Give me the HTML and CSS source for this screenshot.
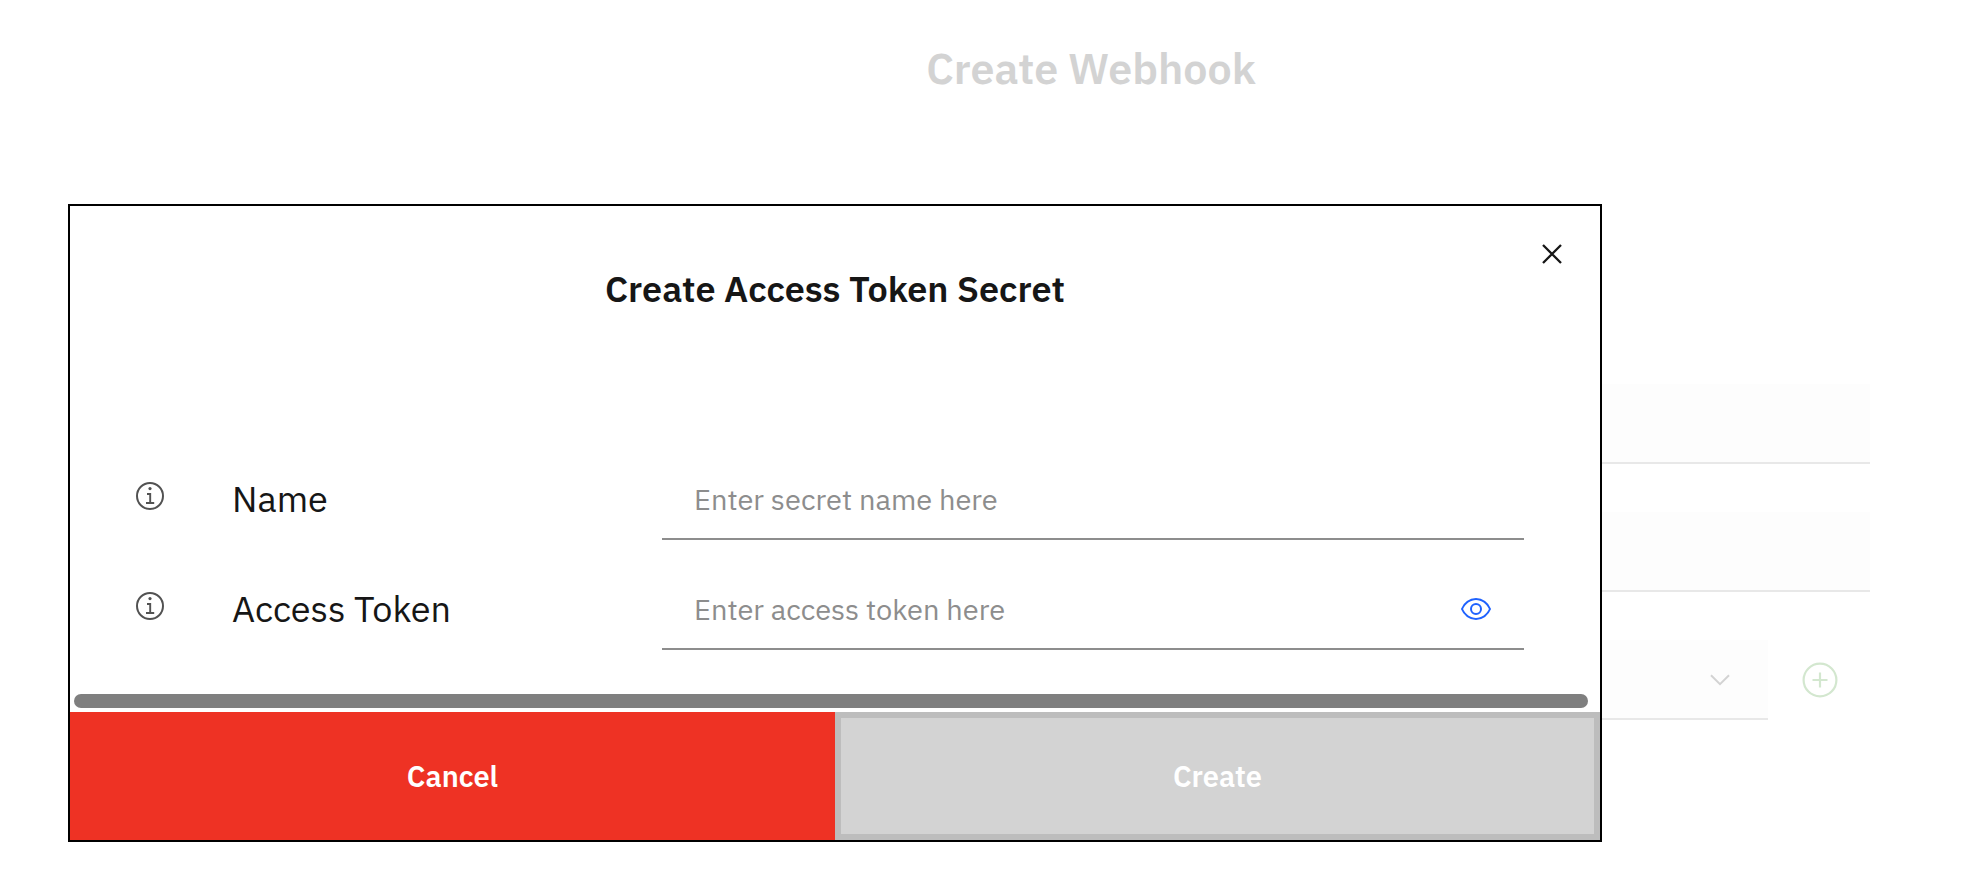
FILE: index.html
```html
<!DOCTYPE html>
<html lang="en">
<head>
<meta charset="utf-8">
<title>Create Webhook</title>
<link rel="stylesheet" href="styles.css">
</head>
<body>
<main class="page">
  <h1 class="page-title">Create Webhook</h1>
  <form class="page-form">
    <input class="page-field" type="text" aria-label="Webhook name">
    <input class="page-field" type="text" aria-label="Repository URL">
    <div class="page-row">
      <div class="select-wrap">
        <select class="page-field" aria-label="Access token"><option></option></select>
        <svg class="chevron" viewBox="0 0 20 12" aria-hidden="true"><path d="M1 1.2 10 10.2 19 1.2" fill="none" stroke="currentColor" stroke-width="2"/></svg>
      </div>
      <button class="add-button" type="button" aria-label="Add access token">
        <svg viewBox="0 0 36 36" aria-hidden="true"><g fill="none" stroke="currentColor" stroke-width="2.2"><circle cx="18" cy="18" r="16.4"/><path d="M18 10.5v15M10.5 18h15"/></g></svg>
      </button>
    </div>
  </form>
</main>

<section class="modal" role="dialog" aria-labelledby="modal-title">
  <header class="modal-header">
    <button class="close-button" type="button" aria-label="Close">
      <svg viewBox="0 0 20 20" aria-hidden="true"><path d="M1 1 19 19M19 1 1 19" stroke="currentColor" stroke-width="2.3"/></svg>
    </button>
    <h2 class="modal-title" id="modal-title">Create Access Token Secret</h2>
  </header>
  <div class="modal-body">
    <div class="form-row">
      <svg class="info" viewBox="0 0 28 28" aria-hidden="true"><circle cx="14" cy="14" r="13" fill="none" stroke="currentColor" stroke-width="2"/><circle cx="14" cy="6.6" r="1.6" fill="currentColor"/><path d="M11 12h3.2v9M10 21h8.2" fill="none" stroke="currentColor" stroke-width="1.9"/></svg>
      <label class="form-label" for="secret-name">Name</label>
      <div class="input-wrap"><input class="form-input" id="secret-name" type="text" placeholder="Enter secret name here"></div>
    </div>
    <div class="form-row">
      <svg class="info" viewBox="0 0 28 28" aria-hidden="true"><circle cx="14" cy="14" r="13" fill="none" stroke="currentColor" stroke-width="2"/><circle cx="14" cy="6.6" r="1.6" fill="currentColor"/><path d="M11 12h3.2v9M10 21h8.2" fill="none" stroke="currentColor" stroke-width="1.9"/></svg>
      <label class="form-label" for="access-token">Access Token</label>
      <div class="input-wrap">
        <input class="form-input" id="access-token" type="password" placeholder="Enter access token here">
        <button class="eye-button" type="button" aria-label="Show access token">
          <svg viewBox="0 0 32 32" fill="currentColor" aria-hidden="true"><path d="M30.94 15.66A16.69 16.69 0 0 0 16 5 16.69 16.69 0 0 0 1.06 15.66a1 1 0 0 0 0 .68A16.69 16.69 0 0 0 16 27a16.69 16.69 0 0 0 14.94-10.66 1 1 0 0 0 0-.68zM16 25c-5.3 0-10.9-3.93-12.93-9C5.1 10.93 10.7 7 16 7s10.9 3.93 12.93 9C26.9 21.07 21.3 25 16 25z"/><path d="M16 10a6 6 0 1 0 6 6 6 6 0 0 0-6-6zm0 10a4 4 0 1 1 4-4 4 4 0 0 1-4 4z"/></svg>
        </button>
      </div>
    </div>
  </div>
  <div class="scroll-track"><div class="scroll-thumb"></div></div>
  <footer class="modal-footer">
    <button class="action cancel" type="button">Cancel</button>
    <button class="action create" type="button" disabled>Create</button>
  </footer>
</section>
</body>
</html>
```

FILE: styles.css
```css
* { box-sizing: border-box; }
body {
  margin: 0;
  min-height: 100vh;
  position: relative;
  background: #fff;
  color: #161616;
  font-family: "IBM Plex Sans", "Noto Sans", sans-serif;
}
button, input, select { font: inherit; margin: 0; border-radius: 0; }
button { padding: 0; border: 0; background: none; color: inherit; cursor: pointer; }
svg { display: block; }

.page { padding: 40px 93px 0 312px; }
.page-title {
  margin: 0;
  font-size: 43px;
  line-height: 56px;
  font-weight: 600;
  text-align: center;
  color: #d3d3d3;
}
.page-form {
  display: flex;
  flex-direction: column;
  gap: 48px;
  margin-top: 288px;
  padding-left: 40%;
}
.page-field {
  display: block;
  width: 100%;
  height: 80px;
  border: 0;
  border-bottom: 2px solid #e8e8e8;
  background: #fdfdfd;
  appearance: none;
}
.page-row { display: flex; align-items: center; gap: 34px; padding-right: 32px; }
.select-wrap { position: relative; flex: 1; }
.chevron { position: absolute; right: 38px; top: 34px; width: 20px; height: 12px; color: #d3d3d3; pointer-events: none; }
.add-button { width: 36px; height: 36px; color: #d3e7cf; }

.modal {
  position: absolute;
  top: 204px;
  left: 68px;
  right: 361px;
  border: 2px solid #000;
  background: #fff;
}
.modal-header { padding: 32px 32px 0; }
.close-button { display: block; width: 32px; height: 32px; padding: 6px; margin-left: auto; }
.modal-title {
  margin: 0;
  font-size: 36px;
  line-height: 38px;
  font-weight: 600;
  text-align: center;
}
.modal-body {
  display: flex;
  flex-direction: column;
  gap: 30px;
  padding: 152px 76px 40px 66px;
}
.form-row { display: grid; grid-template-columns: 96px 430px 1fr; align-items: center; }
.info { width: 28px; height: 28px; margin-bottom: 8px; color: #525252; }
.form-label { font-size: 36px; line-height: 48px; padding-bottom: 2px; }
.input-wrap { display: flex; align-items: center; border-bottom: 2px solid #8d8d8d; padding: 0 32px; }
.form-input {
  flex: 1;
  min-width: 0;
  height: 78px;
  padding: 0;
  border: 0;
  background: none;
  color: #161616;
  font-size: 29px;
  outline: none;
}
.form-input::placeholder { color: #8d8d8d; opacity: 1; }
.eye-button { width: 32px; height: 32px; color: #1f62fe; }
.scroll-track { padding: 4px 12px 4px 4px; }
.scroll-thumb { height: 14px; border-radius: 7px; background: #7f7f7f; }
.modal-footer { display: grid; grid-template-columns: 1fr 1fr; }
.action { height: 128px; font-size: 29px; font-weight: 600; color: #fff; }
.cancel { background: #ee3224; }
.create { border: 6px solid #bdbdbd; background: #d3d3d3; }
```
